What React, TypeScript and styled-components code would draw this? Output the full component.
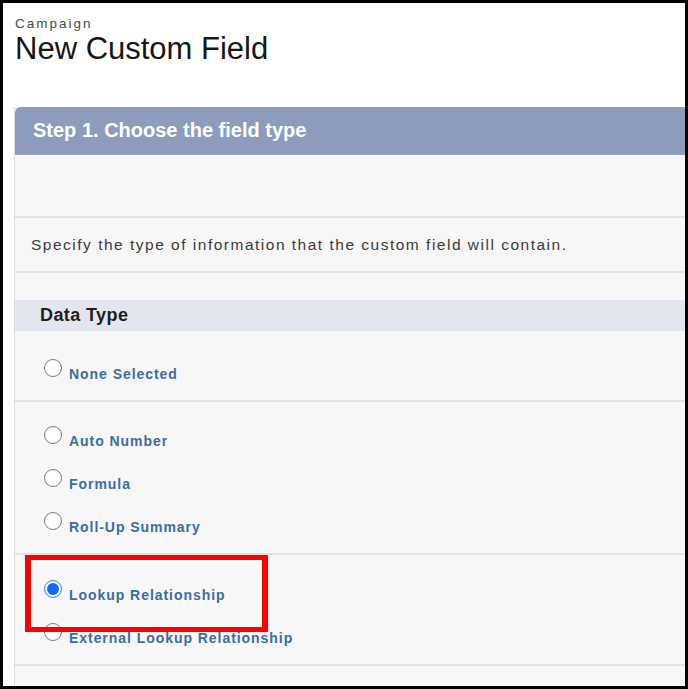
import { createGlobalStyle, styled } from 'styled-components'

const GlobalStyle = createGlobalStyle`
    html, body {
        margin: 0;
        padding: 0;
        background: #ffffff;
    }
    * { box-sizing: border-box; }
`

const Frame = styled.div`
    width: 688px;
    height: 689px;
    border: 3px solid #000;
    overflow: hidden;
    background: #fff;
    padding: 14px 0 0 12px;
    font-family: "Liberation Sans", Arial, sans-serif;
`

const Crumb = styled.div`
    font-size: 13.5px;
    line-height: 14px;
    letter-spacing: 2px;
    color: #4a4a4a;
`

const Title = styled.h1`
    margin: 0;
    font-weight: 400;
    font-size: 31px;
    line-height: 36px;
    color: #161616;
`

const Panel = styled.div`
    margin-top: 40px;
    margin-left: -1px;
    width: 720px;
    background: #f7f7f7;
    border-left: 1px solid #dcdcdc;
`

const StepHeader = styled.div`
    height: 48px;
    display: flex;
    align-items: center;
    padding-left: 18px;
    background: #8d9cbd;
    border-top-left-radius: 6px;
    border-bottom: 1px solid #97a4c1;
    color: #fff;
    font-weight: 700;
    font-size: 20px;
`

const Row = styled.div<{ $h: number }>`
    height: ${p => p.$h}px;
    display: flex;
    align-items: center;
    padding-left: 16px;
    border-bottom: 2px solid #e2e2e2;
    color: #3b3b3b;
    font-size: 15.5px;
    letter-spacing: 1.5px;
`

const Spacer = styled.div<{ $h: number }>`
    height: ${p => p.$h}px;
`

const Band = styled.div`
    height: 31px;
    display: flex;
    align-items: center;
    padding-left: 25px;
    background: #e3e6ee;
    color: #1e1e1e;
    font-size: 18px;
    font-weight: 700;
    letter-spacing: 0.4px;
`

const Group = styled.div<{ $top: number; $bottom: number }>`
    position: relative;
    padding: ${p => p.$top}px 0 ${p => p.$bottom}px 29px;
    border-bottom: 2px solid #e2e2e2;
`

const Option = styled.label`
    height: 43px;
    display: flex;
    align-items: center;
    gap: 7px;
`

const Radio = styled.span<{ $on?: boolean }>`
    width: 18px;
    height: 18px;
    margin-top: -6px;
    flex: none;
    border-radius: 50%;
    background: #fff;
    border: 1.5px solid ${p => (p.$on ? '#3d8ff0' : '#7a7a7a')};
    box-shadow: ${p => (p.$on ? 'inset 0 0 0 2px #fff, inset 0 0 0 8px #0b6cf4' : 'none')};
`

const OptionText = styled.span`
    color: #3d6ca3;
    font-size: 14px;
    font-weight: 700;
    letter-spacing: 0.95px;
    margin-top: 6px;
`

const Highlight = styled.div`
    position: absolute;
    left: 10px;
    top: 0;
    width: 243px;
    height: 77px;
    border: 5px solid #ff0000;
    border-left-width: 6px;
    border-right-width: 6px;
    pointer-events: none;
`

type Item = { label: string; checked?: boolean }

const groups: { top: number; bottom: number; items: Item[]; mark?: boolean }[] = [
    { top: 18.5, bottom: 7.5, items: [{ label: 'None Selected' }] },
    { top: 14.5, bottom: 7.5, items: [{ label: 'Auto Number' }, { label: 'Formula' }, { label: 'Roll-Up Summary' }] },
    { top: 15.5, bottom: 7.5, mark: true, items: [{ label: 'Lookup Relationship', checked: true }, { label: 'External Lookup Relationship' }] },
]

export default function App() {
    return (
        <>
            <GlobalStyle />
            <Frame>
                <Crumb>Campaign</Crumb>
                <Title>New Custom Field</Title>

                <Panel>
                    <StepHeader>Step 1. Choose the field type</StepHeader>
                    <Row $h={63} />
                    <Row $h={55}>Specify the type of information that the custom field will contain.</Row>
                    <Spacer $h={27} />
                    <Band>Data Type</Band>

                    {groups.map((g, i) => (
                        <Group key={i} $top={g.top} $bottom={g.bottom}>
                            {g.items.map(it => (
                                <Option key={it.label}>
                                    <Radio $on={it.checked} />
                                    <OptionText>{it.label}</OptionText>
                                </Option>
                            ))}
                            {g.mark && <Highlight />}
                        </Group>
                    ))}
                    <Spacer $h={40} />
                </Panel>
            </Frame>
        </>
    )
}
